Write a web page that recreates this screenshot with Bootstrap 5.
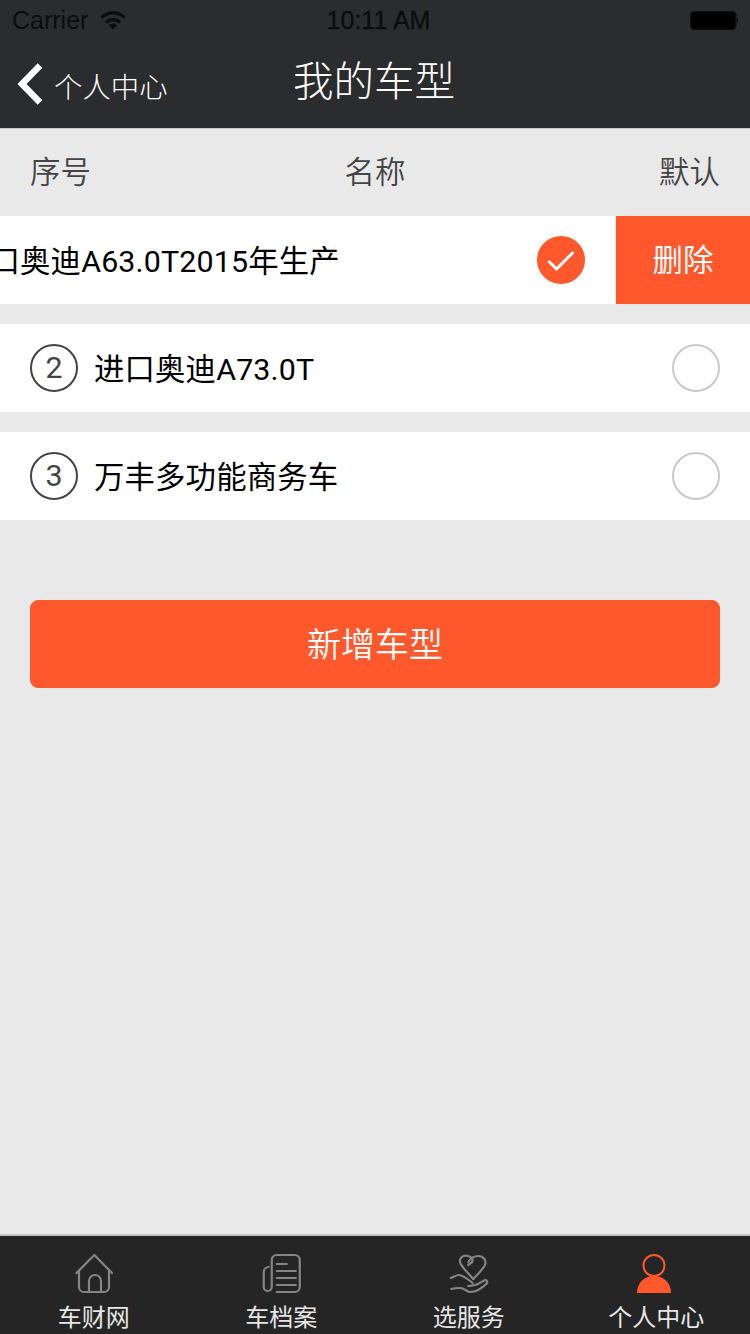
<!DOCTYPE html>
<html lang="zh-CN">
<head>
    <meta charset="UTF-8">
    <meta name="viewport" content="width=device-width, initial-scale=1.0">
    <title>我的车型</title>
    <link href="https://cdn.jsdelivr.net/npm/bootstrap@5.3.2/dist/css/bootstrap.min.css" rel="stylesheet">
    <style>
        html, body { height: 100%; }
        body { background: #e9e9e9; color: #000; font-family: "Liberation Sans", "Noto Sans CJK SC", sans-serif; font-weight: 300; overflow: hidden; }
        .app-screen { width: 750px; height: 1334px; }
        .top-bar { height: 129px; background: #2b2c2e; border-bottom: 1px solid #c8c8c8; color: #fff; }
        .status-row { height: 40px; padding: 0 12px 0 12px; color: #0c0c0c; font-size: 25px; }
        .status-row > div { flex: 1 1 0; }
        .status-label { padding-top: 2px; }
        .status-time { padding: 2px 0 0 7px; -webkit-text-stroke: .3px #0c0c0c; }
        .nav-row { height: 88px; position: relative; }
        .nav-back { padding-left: 17px; font-size: 28.4px; color: #fff; text-decoration: none; gap: 10px; }
        .nav-back span { padding-top: 8px; }
        .nav-title { font-size: 40.5px; line-height: 1; margin: -3px 2px 0 0; }
        .col-heads { height: 87px; padding: 0 30px; color: #444; font-size: 30.4px; font-weight: 350; }
        .col-heads > span { width: 61px; white-space: nowrap; }
        .car-row { height: 88px; background: #fff; margin-bottom: 20px; font-size: 30.4px; overflow: hidden; }
        .car-main { flex: 0 0 750px; padding: 0 30px; }
        .car-main.swiped { margin-left: -135px; }
        .car-name { padding-top: 3px; font-family: Roboto, "Noto Sans CJK SC", sans-serif; font-weight: 400; letter-spacing: .15px; }
        .num-ring { width: 48px; height: 48px; border: 2px solid #444; border-radius: 50%; color: #444; margin-right: 16px; font-family: Roboto, sans-serif; font-weight: 400; }
        .pick-ring { width: 48px; height: 48px; border: 2px solid #c8c8c8; border-radius: 50%; }
        .pick-ring.on { background: #ff582c; border-color: #ff582c; }
        .del-btn { flex: 0 0 135px; padding-top: 2px; background: #ff582c; color: #fff; border-left: 1px solid #e9e9e9; font-weight: 400; }
        .add-btn { width: 690px; height: 88px; margin: 60px 30px 0; padding-top: 9px; background: #ff582c; border-color: #ff582c; color: #fff; font-size: 34px; border-radius: 8px; font-weight: 350; }
        .tab-bar { height: 100px; background: #252525; border-top: 2px solid #c4c4c4; color: #e6e6e6; font-size: 24px; font-weight: 400; }
        .tab-item { flex: 1 1 0; line-height: 1; padding-top: 12px; }
        .tab-item svg { display: block; margin-bottom: 8px; }
        .tab-stroke { fill: none; stroke: #858585; stroke-width: 2.2; stroke-linecap: round; stroke-linejoin: round; }
    </style>
</head>
<body>
<div class="app-screen d-flex flex-column">
    <header class="top-bar">
        <div class="status-row d-flex align-items-center">
            <div class="d-flex align-items-center gap-2">
                <span class="status-label">Carrier</span>
                <svg class="ms-1" width="26" height="19" viewBox="0 0 26 19" fill="none" stroke="#0c0c0c" stroke-width="3.400"><path d="M1.500 6.500a16.500 16.500 0 0 1 23 0"/><path d="M6 11.500a10 10 0 0 1 14 0"/><path d="M13 18.500l-4.200-4.200a6 6 0 0 1 8.400 0z" fill="#0c0c0c" stroke="none"/></svg>
            </div>
            <div class="status-time text-center">10:11 AM</div>
            <div class="d-flex justify-content-end">
                <svg width="48" height="19" viewBox="0 0 48 19"><rect x=".75" y=".75" width="45" height="17.500" rx="3.500" fill="#000" stroke="#0c0c0c" stroke-width="1.500"/><path d="M47 6.500c.7 .3 1 1.300 1 3s-.3 2.700-1 3z" fill="#0c0c0c"/></svg>
            </div>
        </div>
        <div class="nav-row d-flex align-items-center justify-content-center">
            <a class="nav-back d-flex align-items-center position-absolute start-0" href="#">
                <svg width="27" height="42" viewBox="0 0 27 42" fill="none" stroke="#fff" stroke-width="6.500"><path d="M23 2.500 5 21l18 18.500"/></svg>
                <span>个人中心</span>
            </a>
            <div class="nav-title">我的车型</div>
        </div>
    </header>

    <div class="col-heads d-flex align-items-center justify-content-between">
        <span>序号</span><span>名称</span><span>默认</span>
    </div>

    <div class="car-row d-flex">
        <div class="car-main swiped d-flex align-items-center">
            <div class="num-ring d-flex align-items-center justify-content-center flex-shrink-0">1</div>
            <div class="car-name flex-grow-1">进口奥迪A63.0T2015年生产</div>
            <div class="pick-ring on d-flex align-items-center justify-content-center">
                <svg width="28" height="22" viewBox="0 0 28 22" fill="none" stroke="#fff" stroke-width="3"><path d="M1.500 12l8 8L26.500 3"/></svg>
            </div>
        </div>
        <div class="del-btn d-flex align-items-center justify-content-center">删除</div>
    </div>
    <div class="car-row d-flex">
        <div class="car-main d-flex align-items-center">
            <div class="num-ring d-flex align-items-center justify-content-center flex-shrink-0">2</div>
            <div class="car-name flex-grow-1">进口奥迪A73.0T</div>
            <div class="pick-ring"></div>
        </div>
    </div>
    <div class="car-row d-flex">
        <div class="car-main d-flex align-items-center">
            <div class="num-ring d-flex align-items-center justify-content-center flex-shrink-0">3</div>
            <div class="car-name flex-grow-1">万丰多功能商务车</div>
            <div class="pick-ring"></div>
        </div>
    </div>

    <button class="btn add-btn" type="button">新增车型</button>

    <nav class="tab-bar d-flex mt-auto">
        <div class="tab-item d-flex flex-column align-items-center">
            <svg width="60" height="50" viewBox="0 0 60 50"><g class="tab-stroke"><path d="M12.500 25 30.300 7 48 25"/><path d="M15 23v16a5 5 0 0 0 5 5h20a5 5 0 0 0 5-5V23"/><path d="M25 44V33a6 6 0 0 1 12 0v11"/></g></svg>
            <span>车财网</span>
        </div>
        <div class="tab-item d-flex flex-column align-items-center">
            <svg width="60" height="50" viewBox="-3.750 0 60 50"><g class="tab-stroke"><path d="M22 44h18a5 5 0 0 0 5-5V12a5 5 0 0 0-5-5H22a5 5 0 0 0-5 5v27a4 4 0 0 1-8 0V24a5 5 0 0 1 5-5"/><path d="M22 16h10M22 23h19M22 30h19M22 37h19"/></g></svg>
            <span>车档案</span>
        </div>
        <div class="tab-item d-flex flex-column align-items-center">
            <svg width="60" height="50" viewBox="-1.250 0 60 50"><g class="tab-stroke"><path d="M33 31 24 21c-4-5-5-7-4-10 1-3 5-4 8-3 3 1 5 3 4 6l-4 3"/><path d="M28 14c2-3 6-6 10-6 5 0 8 4 7 8-1 4-5 8-12 15"/><path d="M10.500 30c3-1 5-3 8-3 4 0 9 4 14 8"/><path d="M11 41c3-1 6-1 9-1 4 0 7 4 10 4 7 0 12-4 17-9 0-2-1-3-2-3-3 1-6 4-10 5-2 0-4 1-7 1"/></g></svg>
            <span>选服务</span>
        </div>
        <div class="tab-item d-flex flex-column align-items-center">
            <svg width="60" height="50" viewBox="0 0 60 50"><circle cx="28" cy="17.500" r="10.500" fill="none" stroke="#ff582c" stroke-width="2"/><path d="M11 45c0-10 7-17 17-17s17 7 17 17z" fill="#ff582c"/></svg>
            <span>个人中心</span>
        </div>
    </nav>
</div>
<script src="https://cdn.jsdelivr.net/npm/bootstrap@5.3.2/dist/js/bootstrap.bundle.min.js"></script>
</body>
</html>
